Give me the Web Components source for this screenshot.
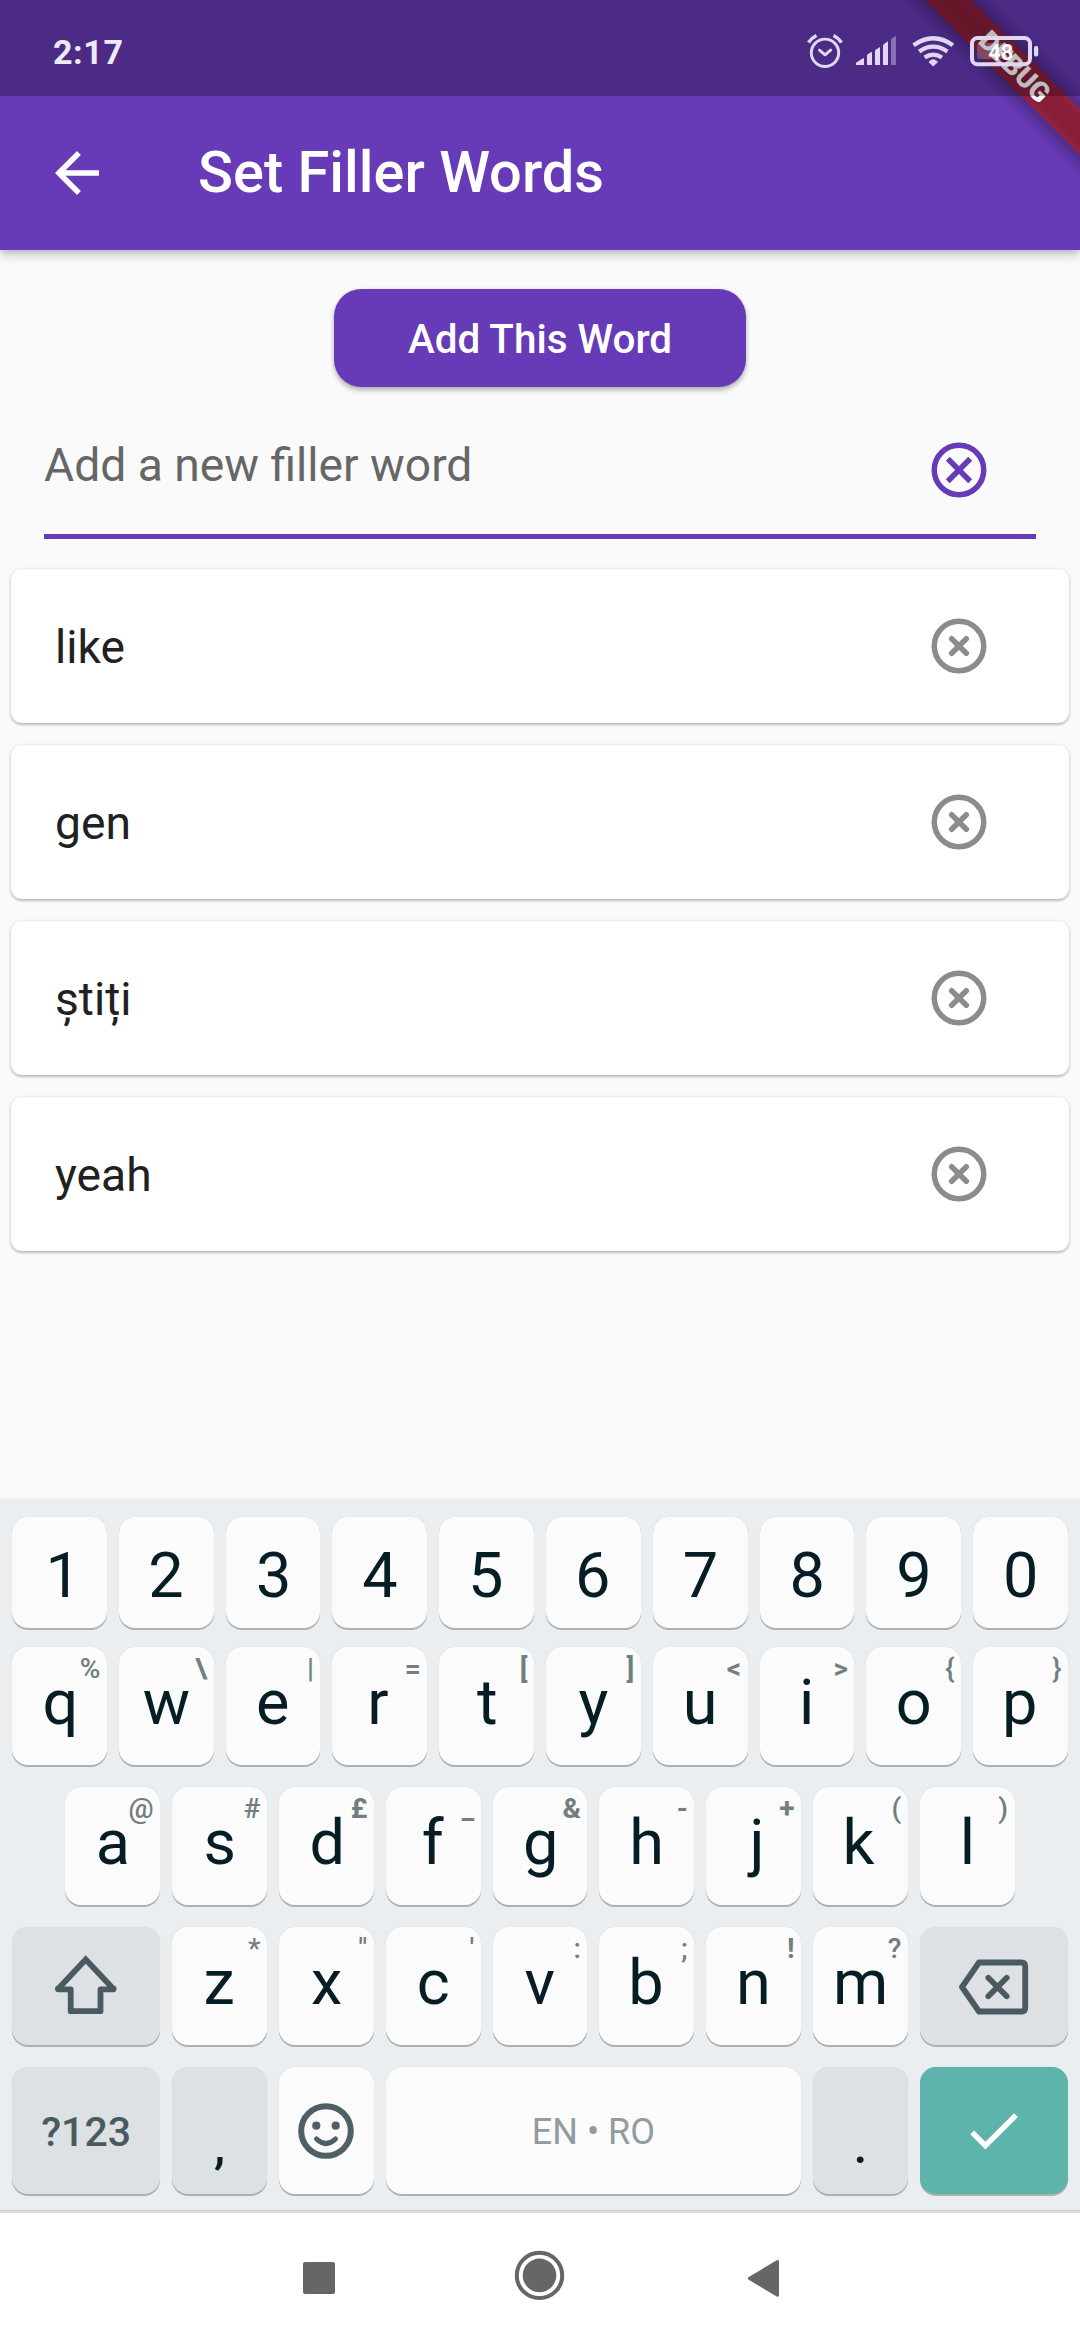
<!DOCTYPE html>
<html lang="en">
<head>
<meta charset="utf-8">
<title>Set Filler Words</title>
<style>
html, body { margin: 0; padding: 0; }
body { width: 1080px; height: 2340px; overflow: hidden; background: #fafafa; font-family: Roboto, "Noto Sans", sans-serif; }
</style>
</head>
<body>
<filler-app></filler-app>
<script>
function define(name, css, html) {
  const t = document.createElement('template');
  t.innerHTML = '<style>*{box-sizing:border-box}svg{display:block}' + css + '</style>' + html;
  customElements.define(name, class extends HTMLElement {
    constructor() {
      super();
      this.attachShadow({ mode: 'open' }).appendChild(t.content.cloneNode(true));
    }
    connectedCallback() {
      const h = this.shadowRoot.querySelector('.hint');
      if (h) h.textContent = this.getAttribute('hint') || '';
      const u = this.getAttribute('units');
      if (u) this.style.setProperty('--units', u);
    }
  });
}

define('status-bar', `
  :host { display: flex; align-items: center; height: 96px; background: rgba(0,0,0,.26); position: relative; z-index: 2; padding: 7px 0 0 53px; box-sizing: border-box; }
  span { font-size: 34px; font-weight: 700; line-height: 40px; color: #eee9f6; letter-spacing: .6px; flex: 1; }
  svg { flex: none; margin-top: -7px; }
`, `
  <span>2:17</span>
  <svg width="280" height="96" viewBox="800 0 280 96" fill="none" stroke="#e0d7f0" stroke-width="2.9">
    <circle cx="825" cy="52.8" r="13.7"/>
    <path d="M819.5 50.2l5.5 4.6 5.7-4.6" stroke-width="3" stroke-linecap="round" stroke-linejoin="round"/>
    <path d="M808.5 42.5q3-4.500 8-7M841.500 42.500q-3-4.500-8-7" stroke-width="3.600"/>
    <g fill="#e0d7f0" stroke="none">
      <path d="M856 65v-2.200l7.500-4.800q.5 0 .5 .8V65zM867 65V55.500q0-1 1-1.500l4-2.200V65zM875 65V51q0-1 1-1.500l4-2.500V65zM883 65V45.500q0-1 1-1.500l4-2.700V65z"/>
      <path opacity=".42" d="M891 65V40q0-1 1-1.500l4-2.700V65z"/>
      <path d="M933.200 66l-4.200-4q4.200-4.500 8.500 0z" stroke="#e0d7f0" stroke-width="1" stroke-linejoin="round"/>
      <rect x="1034" y="46" width="4.200" height="10.500" rx="1.800"/>
      <path opacity=".25" d="M980 43h22v16h-22q-3 0-3-3V46q0-3 3-3z"/>
    </g>
    <path stroke-width="4.300" d="M913.600 45.200q19.700-14 39.300 0M919.200 51.500q14-9.800 28.200 0M924.700 57.600q8.500-6 17.200 0"/>
    <rect x="972" y="38" width="58" height="26.300" rx="5.500" stroke-width="4"/>
    <text x="1000.800" y="60" fill="#fff" stroke="none" font-family="Roboto, sans-serif" font-weight="700" font-size="22" text-anchor="middle">48</text>
  </svg>
`);

define('debug-banner', `
  :host { display: block; position: absolute; top: 0; right: 0; z-index: 1; width: 240px; height: 250px; overflow: hidden; }
`, `
  <svg width="240" height="250" viewBox="840 0 240 250">
    <defs><filter id="soft" x="-50%" y="-200%" width="200%" height="500%"><feGaussianBlur stdDeviation="10.900"/></filter></defs>
    <g transform="translate(1014 66) rotate(45)">
      <rect x="-220" y="-16.500" width="440" height="33" fill="#000" fill-opacity=".5" filter="url(#soft)"/>
      <rect x="-220" y="-16.500" width="440" height="33" fill="#b71c1c" fill-opacity=".63"/>
      <text x="1" y="9.500" fill="#fff" font-family="Roboto, sans-serif" font-weight="900" font-size="27.500" text-anchor="middle">DEBUG</text>
    </g>
  </svg>
`);

define('app-bar', `
  :host { display: block; position: relative; height: 250px; flex: none; background: #673ab7; box-shadow: 0 5px 11px rgba(0,0,0,.19), 0 2px 6px rgba(0,0,0,.13); }
  .bar { display: flex; align-items: center; height: 154px; padding-left: 44px; }
  h1 { margin: 0 0 3px 88px; font-size: 57.750px; font-weight: 500; line-height: 66px; color: #fff; white-space: nowrap; }
`, `
  <status-bar></status-bar>
  <div class="bar">
    <svg width="66" height="66" viewBox="0 0 24 24" fill="#fff"><path d="M20 11H7.830l5.590-5.590L12 4l-8 8 8 8 1.410-1.410L7.830 13H20z"/></svg>
    <h1><slot></slot></h1>
  </div>
  <debug-banner></debug-banner>
`);

define('raised-button', `
  :host { display: flex; align-items: center; justify-content: center; width: 412px; height: 98px; border-radius: 27.500px; background: #673ab7; color: #fff; font-size: 40.400px; font-weight: 500; line-height: 48px; padding-top: 4px; box-sizing: border-box; box-shadow: 0 4px 5px rgba(0,0,0,.2), 0 1px 4px rgba(0,0,0,.16); align-self: center; flex: none; }
`, `<slot></slot>`);

define('word-field', `
  :host { display: flex; align-items: center; justify-content: space-between; height: 152px; margin: 0 44px; padding: 19px 44px 0 0; box-sizing: border-box; border-bottom: 5.500px solid #673ab7; flex: none; color: #666; font-size: 46.200px; line-height: 54px; }
  span { margin-bottom: 11px; }
`, `
  <span><slot></slot></span>
  <svg width="66" height="66" viewBox="-33 -33 66 66" fill="none" stroke="#673ab7" stroke-width="5.500"><circle r="24.750"/><path d="M-11.200-11.200L11.200 11.200M11.200-11.200L-11.200 11.200"/></svg>
`);

define('word-card', `
  :host { display: flex; align-items: center; justify-content: space-between; height: 154px; margin: 0 11px; padding: 0 77px 0 44px; box-sizing: border-box; border-radius: 11px; background: #fff; box-shadow: 0 2px 3px rgba(0,0,0,.22), 0 0 3px rgba(0,0,0,.13); flex: none; color: #212121; font-size: 46.200px; line-height: 54px; }
  span { padding-top: 1px; }
`, `
  <span><slot></slot></span>
  <svg width="66" height="66" viewBox="-33 -33 66 66" fill="none" stroke="#8c8c8c" stroke-width="5.500" stroke-linecap="round"><circle r="24.750"/><path d="M-7.300-7.300L7.300 7.300M7.300-7.300L-7.300 7.300"/></svg>
`);

define('word-list', `
  :host { display: flex; flex-direction: column; gap: 22px; margin-top: 30px; }
`, `<slot></slot>`);

define('kb-key', `
  :host { display: flex; position: relative; align-items: center; justify-content: center; width: calc(var(--units, 1) * 106.800px - 12px); height: 100%; box-sizing: border-box; border-radius: 16px; background: #fbfbfb; box-shadow: 0 2px 0 #aeb1b3, 0 0 1px rgba(0,0,0,.15); color: #061d26; font-size: 63px; line-height: 74px; padding-bottom: 7px; flex: none; }
  :host([kind=num]) { padding: 6px 0 0; }
  :host([dim]) { background: #dde1e4; }
  :host([kind=icon]) { padding: 0; }
  :host([kind=mode]) { padding: 3px 0 0; font-size: 41px; font-weight: 500; color: #4a5a61; }
  :host([kind=space]) { padding: 3px 0 0; font-size: 36px; color: #929b9f; }
  :host([kind=punct]) { padding: 30px 0 0; font-size: 50px; font-weight: 500; }
  :host([kind=enter]) { padding: 0; background: #5cb4aa; }
  .hint { position: absolute; top: 7.500px; right: 6.500px; font-size: 28px; line-height: 28px; font-weight: 500; color: #737e81; }
  :host([strong]) .hint { font-weight: 700; }
  .cap { margin-left: var(--nudge, 0px); }
`, `<span class="cap"><slot></slot></span><span class="hint"></span>`);

define('kb-row', `
  :host { display: flex; justify-content: center; gap: 12px; height: var(--h, 118px); }
`, `<slot></slot>`);

define('soft-keyboard', `
  :host { display: flex; flex-direction: column; height: 714px; flex: none; box-sizing: border-box; padding-top: 18px; background: #eaeef1; border-bottom: 2px solid #dedfe0; box-shadow: inset 0 -1px 0 #c9cccd, 0 -1px 2px rgba(0,0,0,.03); gap: 22px; }
  .n { --h: 111px; margin-bottom: -3px; } .b { --h: 127px; }
`, `
  <kb-row class="n" id="numbers"></kb-row>
  <kb-row id="top"></kb-row>
  <kb-row id="home"></kb-row>
  <kb-row id="low"></kb-row>
  <kb-row class="b" id="bottom">
    <kb-key units="1.5" dim kind="mode">?123</kb-key>
    <kb-key dim kind="punct">,</kb-key>
    <kb-key kind="icon"><svg width="66" height="66" viewBox="-33 -33 66 66" fill="none" stroke="#4f5f66" stroke-width="6"><circle r="24.800"/><g fill="#4f5f66" stroke="none"><circle cx="-9.700" cy="-5.300" r="4.100"/><circle cx="9.700" cy="-5.300" r="4.100"/></g><path d="M-9.500 8Q0 17 9.500 8" stroke-width="5" stroke-linecap="round"/></svg></kb-key>
    <kb-key units="4" kind="space">EN • RO</kb-key>
    <kb-key dim kind="punct">.</kb-key>
    <kb-key units="1.5" kind="enter"><svg width="65" height="65" viewBox="0 0 24 24" fill="#fff"><path d="M9 16.170L4.830 12l-1.420 1.410L9 19 21 7l-1.410-1.410z"/></svg></kb-key>
  </kb-row>
`);

define('nav-bar', `
  :host { display: block; height: 127px; background: #fff; flex: none; }
`, `
  <svg width="1080" height="127" viewBox="0 2213 1080 127" fill="#666">
    <rect x="303" y="2262" width="32" height="32" rx="2"/>
    <circle cx="539.500" cy="2275.400" r="22.700" fill="none" stroke="#666" stroke-width="4"/>
    <circle cx="539.500" cy="2275.400" r="16.800"/>
    <path d="M749.500 2278.400L777.500 2261.500V2295.300Z" stroke="#666" stroke-width="3" stroke-linejoin="round"/>
  </svg>
`);

define('filler-app', `
  :host { display: flex; flex-direction: column; width: 1080px; height: 2340px; }
  main { display: flex; flex-direction: column; height: 1249px; padding-top: 39px; flex: none; }
`, `
  <app-bar>Set Filler Words</app-bar>
  <main>
    <raised-button>Add This Word</raised-button>
    <word-field>Add a new filler word</word-field>
    <word-list>
      <word-card>like</word-card><word-card>gen</word-card><word-card>știți</word-card><word-card>yeah</word-card>
    </word-list>
  </main>
  <soft-keyboard></soft-keyboard>
  <nav-bar></nav-bar>
`);

const board = document.querySelector('filler-app').shadowRoot.querySelector('soft-keyboard').shadowRoot;
const pen = document.createElement('canvas').getContext('2d');
pen.font = '63px Roboto';

// Centres a key by the glyph's ink rather than by its advance width.
function nudge(c) {
  const m = pen.measureText(c);
  const ink = (m.actualBoundingBoxRight - m.actualBoundingBoxLeft) / 2;
  return (m.width / 2 - ink) * 2;
}
function addKeys(row, letters, hints, kind) {
  const host = board.getElementById(row);
  [...letters].forEach((c, i) => {
    const k = document.createElement('kb-key');
    k.textContent = c;
    k.style.setProperty('--nudge', nudge(c).toFixed(2) + 'px');
    if (hints) {
      k.setAttribute('hint', hints[i]);
      if ('\\£[]=<>&+-_!'.includes(hints[i])) k.setAttribute('strong', '');
    }
    if (kind) k.setAttribute('kind', kind);
    host.append(k);
  });
}
function iconKey(svg) {
  const k = document.createElement('kb-key');
  k.setAttribute('units', '1.5'); k.setAttribute('dim', ''); k.setAttribute('kind', 'icon');
  k.innerHTML = svg;
  return k;
}
addKeys('numbers', '1234567890', null, 'num');
addKeys('top', 'qwertyuiop', '%\\|=[]<>{}');
addKeys('home', 'asdfghjkl', '@#£_&-+()');
addKeys('low', 'zxcvbnm', '*"\':;!?');
const low = board.getElementById('low');
low.prepend(iconKey('<svg width="70" height="70" viewBox="51 1951 70 70" fill="none" stroke="#4a5a61" stroke-width="5.800" stroke-linejoin="round"><path stroke-linejoin="miter" d="M58.500 1988.500L85.700 1959.500L113 1988.500"/><path d="M58.500 1987.500Q57 1989.400 59 1989.400H70.700V2011.200H100.500V1989.400H112.500Q114.500 1989.400 113 1987.500"/></svg>'));
low.append(iconKey('<svg width="80" height="70" viewBox="953.500 1952.500 80 70" fill="none" stroke="#4a5a61" stroke-width="5.800" stroke-linejoin="round" stroke-linecap="round"><path d="M978.500 1964H1021Q1024.700 1964 1024.700 1967.700V2009.300Q1024.700 2013 1021 2013H978.500L961.500 1988.500Z"/><path d="M987.800 1979.300L1006.200 1997.700M1006.200 1979.300L987.800 1997.700"/></svg>'));
</script>
</body>
</html>
